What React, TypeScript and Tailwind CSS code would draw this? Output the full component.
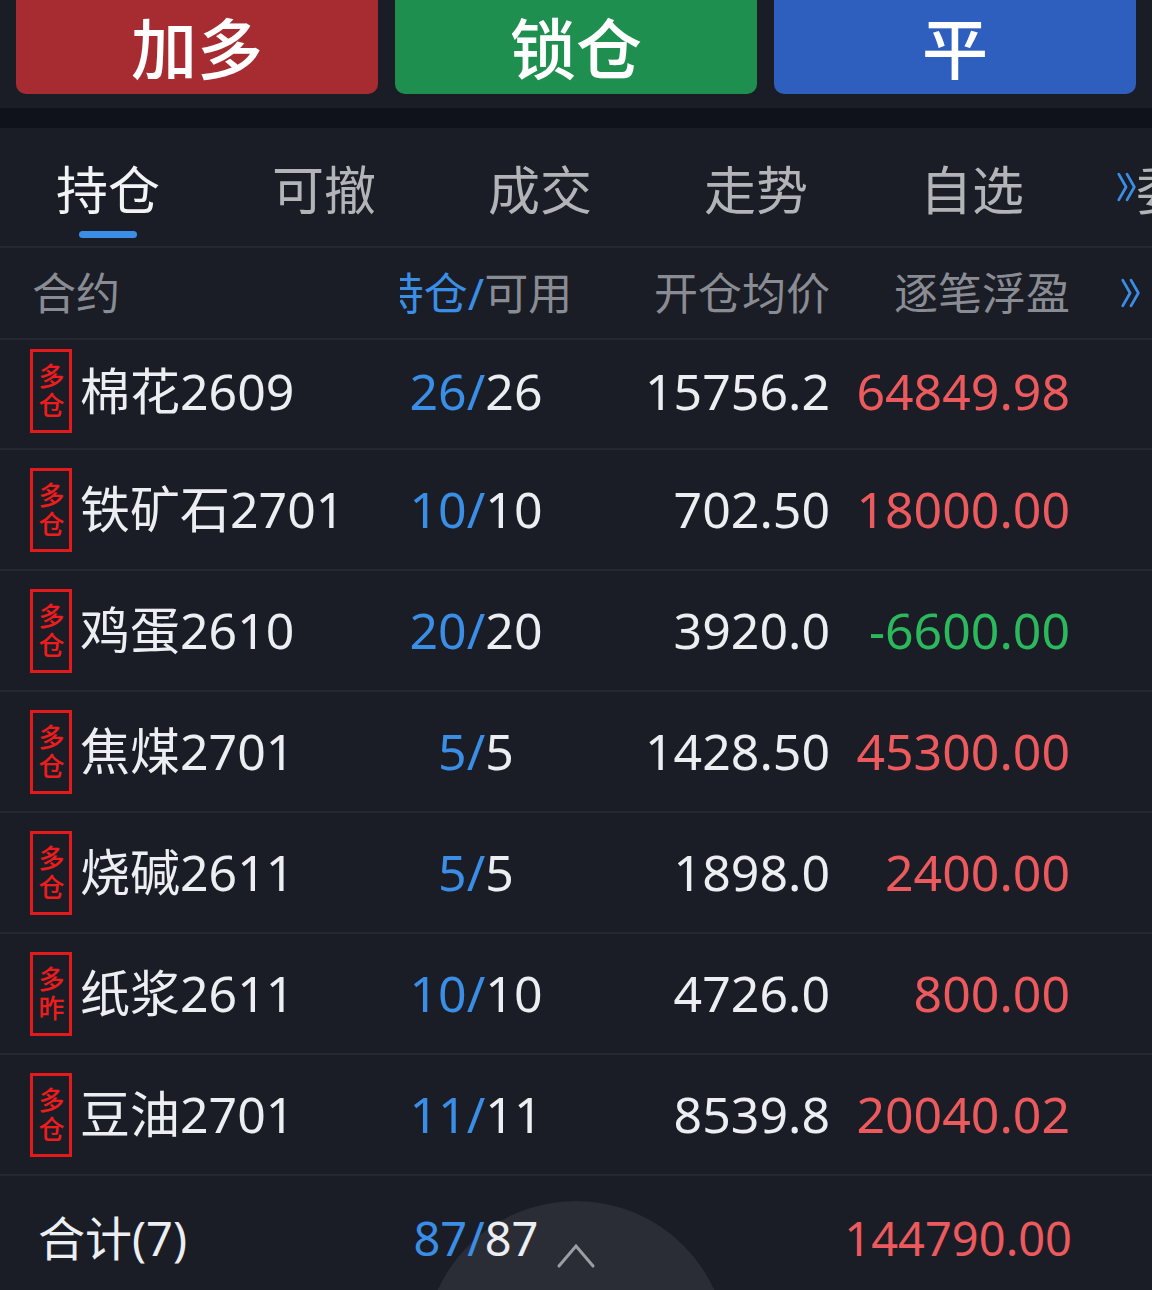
import React from 'react';

type Row = {
  tag: string;
  name: string;
  pos: string;
  avail: string;
  price: string;
  pnl: string;
  loss?: boolean;
};

const rows: Row[] = [
  { tag: '多仓', name: '棉花2609', pos: '26', avail: '26', price: '15756.2', pnl: '64849.98' },
  { tag: '多仓', name: '铁矿石2701', pos: '10', avail: '10', price: '702.50', pnl: '18000.00' },
  { tag: '多仓', name: '鸡蛋2610', pos: '20', avail: '20', price: '3920.0', pnl: '-6600.00', loss: true },
  { tag: '多仓', name: '焦煤2701', pos: '5', avail: '5', price: '1428.50', pnl: '45300.00' },
  { tag: '多仓', name: '烧碱2611', pos: '5', avail: '5', price: '1898.0', pnl: '2400.00' },
  { tag: '多昨', name: '纸浆2611', pos: '10', avail: '10', price: '4726.0', pnl: '800.00' },
  { tag: '多仓', name: '豆油2701', pos: '11', avail: '11', price: '8539.8', pnl: '20040.02' },
];

const tabs = ['持仓', '可撤', '成交', '走势', '自选', '委托'];

const font = { fontFamily: '"Noto Sans", "Noto Sans CJK SC", sans-serif' };

function DoubleChevron({ className }: { className?: string }) {
  return (
    <svg viewBox="0 0 24 34" className={className} fill="none" stroke="#3a8ee6" strokeWidth="3" strokeLinecap="round" strokeLinejoin="round">
      <path d="M3 3 L11 17 L3 31" />
      <path d="M12 3 L20 17 L12 31" />
    </svg>
  );
}

// vertical 多/仓 tag box
function Badge({ tag }: { tag: string }) {
  return (
    <div
      className="w-[42px] h-[84px] shrink-0 border-[3px] border-[#e3191c] flex items-center justify-center pt-[2px] text-[#ee1c1c]"
      style={{ fontFamily: '"Noto Sans CJK SC", sans-serif' }}
    >
      <span className="[writing-mode:vertical-rl] text-[26px] leading-none tracking-[3px] font-medium">{tag}</span>
    </div>
  );
}

function PositionRow({ row, first }: { row: Row; first?: boolean }) {
  return (
    <div className={`flex items-center border-b-2 border-[#252831] ${first ? 'h-[110px] pb-[6px]' : 'h-[121px]'}`}>
      <div className="w-[400px] shrink-0 flex items-center pl-[30px] gap-[8px]">
        <Badge tag={row.tag} />
        <span className="text-[50px] text-[#eceef2] whitespace-nowrap">{row.name}</span>
      </div>
      <div className="flex-1 flex items-center overflow-hidden text-[50px]">
        <div className="w-[152px] shrink-0 flex justify-center whitespace-nowrap">
          <span className="text-[#3a8ee6]">{row.pos}/</span>
          <span className="text-[#eceef2]">{row.avail}</span>
        </div>
        <div className="w-[278px] shrink-0 text-right text-[#eceef2]">{row.price}</div>
        <div className={`w-[240px] shrink-0 text-right ${row.loss ? 'text-[#2cb85c]' : 'text-[#ec5a5d]'}`}>
          {row.pnl}
        </div>
      </div>
    </div>
  );
}

export default function App() {
  return (
    <div className="w-[1152px] h-[1290px] overflow-hidden bg-[#1a1d26] relative" style={font}>
      {/* action buttons */}
      <div className="flex gap-[17px] px-[16px]">
        <button className="flex-1 h-[94px] rounded-b-[10px] bg-[#a72c31] text-white text-[66px] font-medium leading-none pt-[2px]">加多</button>
        <button className="flex-1 h-[94px] rounded-b-[10px] bg-[#1f8f4f] text-white text-[66px] font-medium leading-none pt-[2px]">锁仓</button>
        <button className="flex-1 h-[94px] rounded-b-[10px] bg-[#2f5fbe] text-white text-[66px] font-medium leading-none pt-[2px]">平</button>
      </div>
      <div className="h-[14px]" />
      <div className="h-[20px] bg-[#0f121a]" />

      {/* tabs */}
      <div className="relative h-[120px] flex overflow-hidden border-b-2 border-[#252831]">
        {tabs.map((t, i) => (
          <div key={t} className="w-[216px] shrink-0 flex flex-col items-center pt-[36px]">
            <span className={`text-[52px] leading-[52px] whitespace-nowrap ${i === 0 ? 'text-[#f2f3f5]' : 'text-[#b3b4b8]'}`}>{t}</span>
            {i === 0 && <div className="mt-[15px] w-[58px] h-[7px] rounded-full bg-[#3a8ee6]" />}
          </div>
        ))}
        <DoubleChevron className="absolute left-[1116px] top-[42px] w-[22px] h-[34px]" />
      </div>

      {/* header */}
      <div className="h-[92px] flex items-center border-b-2 border-[#252831] text-[44px] text-[#8a8c93]">
        <div className="w-[400px] shrink-0 pl-[32px]">合约</div>
        <div className="flex-1 flex items-center overflow-hidden">
          <div className="w-[152px] shrink-0 flex justify-center whitespace-nowrap">
            <span className="text-[#3a8ee6]">持仓/</span>
            <span>可用</span>
          </div>
          <div className="w-[278px] shrink-0 text-right whitespace-nowrap">开仓均价</div>
          <div className="w-[240px] shrink-0 text-right whitespace-nowrap">逐笔浮盈</div>
          <DoubleChevron className="ml-[50px] w-[22px] h-[32px] shrink-0" />
        </div>
      </div>

      {/* rows */}
      {rows.map((r, i) => (
        <PositionRow key={r.name} row={r} first={i === 0} />
      ))}

      {/* total */}
      <div className="relative h-[124px]">
        <div className="absolute left-[424px] top-[25px] w-[304px] h-[304px] rounded-full bg-[#2a2d36]" />
        <svg className="absolute left-[556px] top-[65px] w-[40px] h-[28px]" viewBox="0 0 40 28" fill="none" stroke="#9c9ea4" strokeWidth="3" strokeLinecap="round">
          <path d="M3 25 L20 5 L37 25" />
        </svg>
        <div className="relative flex items-center h-full text-[47px]">
          <div className="w-[400px] shrink-0 pl-[38px] text-[#eceef2]">合计(7)</div>
          <div className="w-[152px] shrink-0 flex justify-center whitespace-nowrap">
            <span className="text-[#3a8ee6]">87/</span>
            <span className="text-[#eceef2]">87</span>
          </div>
          <div className="w-[278px] shrink-0" />
          <div className="w-[242px] shrink-0 text-right text-[#ec5a5d]">144790.00</div>
        </div>
      </div>
    </div>
  );
}
